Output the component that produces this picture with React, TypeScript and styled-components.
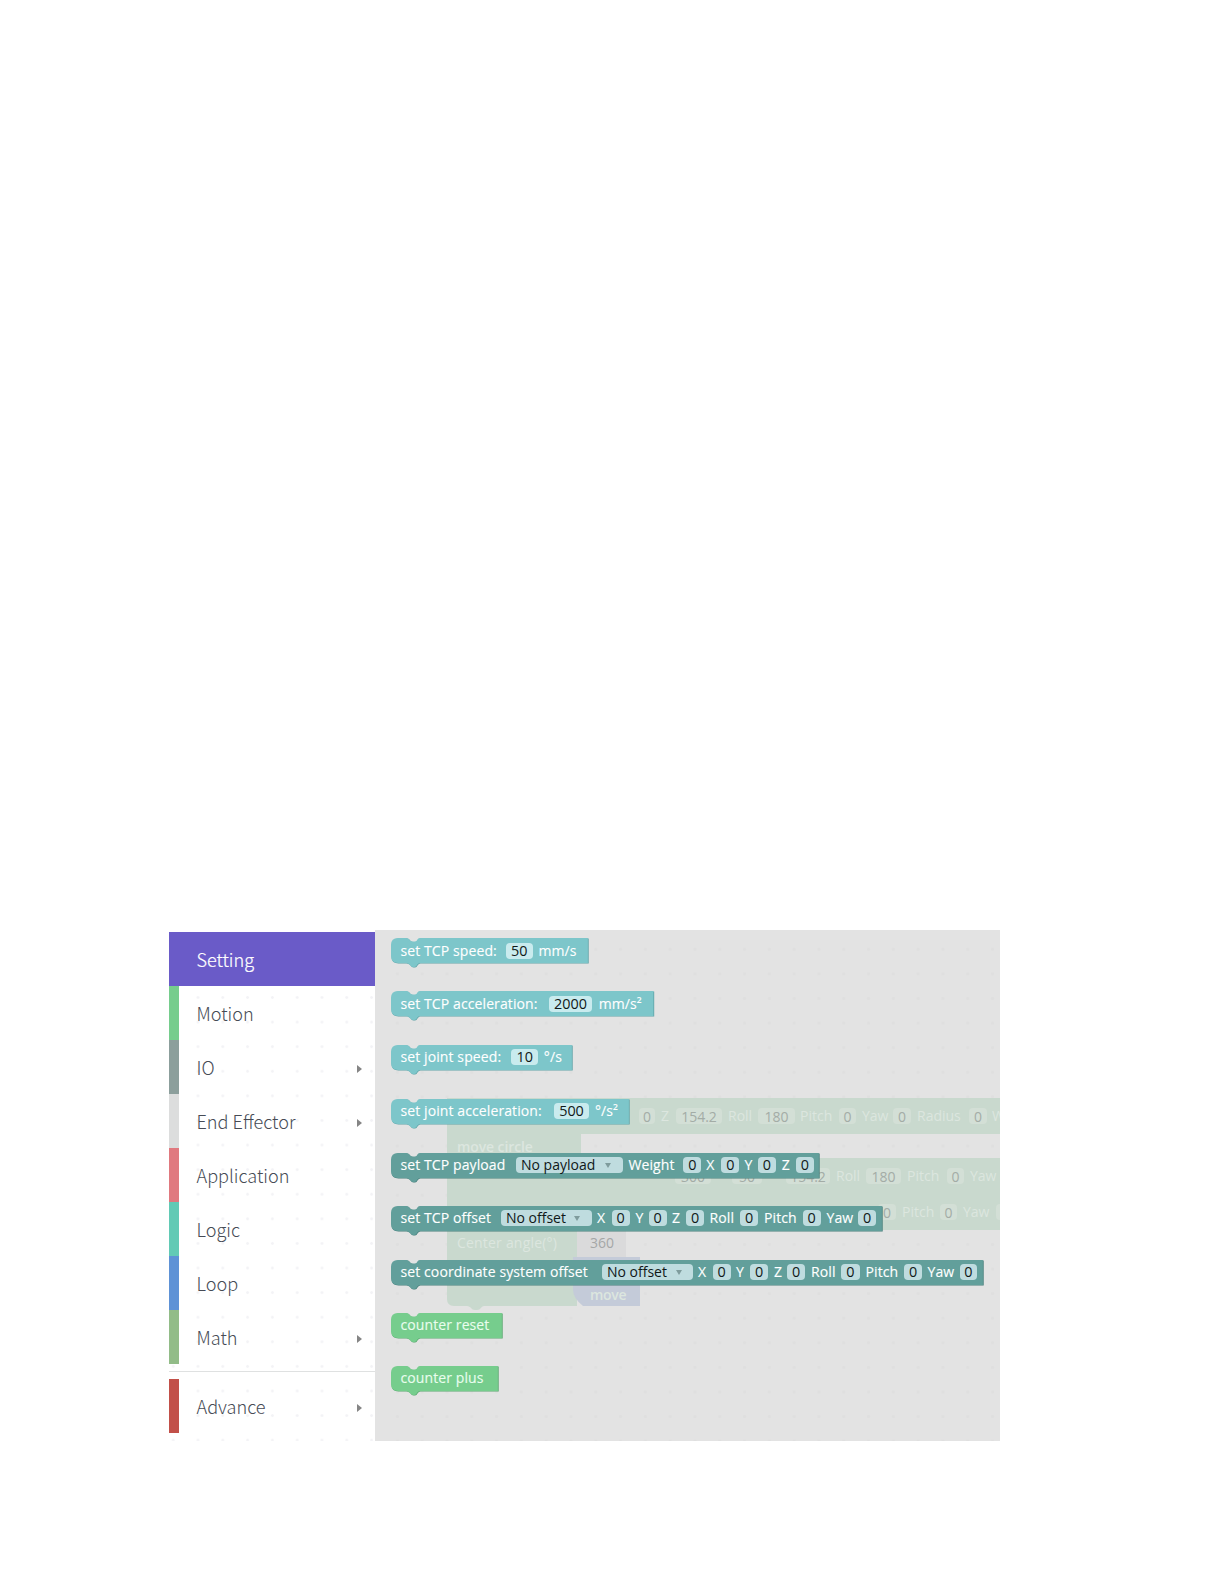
import styled, { createGlobalStyle } from "styled-components";

const GlobalStyle = createGlobalStyle`
  * {
    box-sizing: border-box;
  }
  body {
    margin: 0;
    background: #fff;
  }
`;

const Page = styled.div`
  display: flex;
  align-items: flex-start;
  width: 1224px;
  height: 1584px;
  padding: 930px 0 0 169px;
  overflow: hidden;
`;

const Toolbox = styled.nav`
  display: flex;
  flex-direction: column;
  width: 206px;
  height: 511px;
  padding-top: 2px;
  background-image: radial-gradient(circle, #f3f3f6 1px, transparent 1.7px);
  background-size: 24.8px 24.6px;
  background-position: 16.6px 6px;
`;

const Category = styled.div<{ $color: string; $active?: boolean }>`
  display: flex;
  align-items: center;
  justify-content: space-between;
  height: 54px;
  padding: 0 13.5px 0 17.5px;
  border-left: 10px solid ${(p) => p.$color};
  background: ${(p) => (p.$active ? p.$color : "transparent")};
  color: ${(p) => (p.$active ? "#fff" : "#464b55")};
  font-family: "Noto Sans CJK SC", sans-serif;
  font-size: 18.1px;
  font-weight: 300;
  line-height: 54px;
  -webkit-text-stroke: ${(p) => (p.$active ? "0.2px #fff" : "0")};
`;

const Expand = styled.i`
  width: 0;
  height: 0;
  margin-top: 4px;
  border: solid transparent;
  border-width: 4px 0 4px 5.5px;
  border-left-color: #858585;
`;

const Separator = styled.hr`
  width: 100%;
  height: 1px;
  margin: 7px 0;
  border: 0;
  background: #dfe1e1;
`;

const Flyout = styled.main`
  position: relative;
  width: 625px;
  height: 511px;
  overflow: hidden;
  background-color: #e3e3e3;
  background-image: radial-gradient(circle, #dfdfdf 1px, transparent 2px);
  background-size: 24.8px 24.6px;
  background-position: 10px 7px;
`;

const Ghosts = styled.div`
  position: absolute;
  inset: 0;
`;

const GhostShapes = styled.svg`
  position: absolute;
  left: 0;
  top: 0;
`;

const GhostText = styled.span<{ $x: number; $y: number; $dark?: boolean; $ls?: number; $bold?: boolean }>`
  position: absolute;
  left: ${(p) => p.$x}px;
  top: ${(p) => p.$y - 10}px;
  color: ${(p) => (p.$dark ? "#a5a7a7" : "#dce6df")};
  font: ${(p) => (p.$bold ? 600 : 400)} 14px/20px "Open Sans", sans-serif;
  letter-spacing: ${(p) => p.$ls ?? 0}px;
  white-space: pre;
`;

const GhostField = styled.span<{ $x: number; $y: number; $w: number }>`
  position: absolute;
  left: ${(p) => p.$x}px;
  top: ${(p) => p.$y - 8}px;
  width: ${(p) => p.$w}px;
  height: 16px;
  border-radius: 4px;
  background: #d3dfd6;
  color: #a3aca6;
  font: 14px/17px "Open Sans", sans-serif;
  text-align: center;
`;

const BlockList = styled.div`
  position: relative;
  display: flex;
  flex-direction: column;
  padding: 8px 0 0 16px;
`;

const BlockRow = styled.div<{ $w: number; $h: number }>`
  position: relative;
  display: flex;
  align-items: flex-start;
  width: ${(p) => p.$w}px;
  height: ${(p) => p.$h}px;
  padding: 4.5px 0 0 9.5px;
`;

const Outline = styled.svg`
  position: absolute;
  left: 0;
  top: 0;
  overflow: visible;
`;

const Label = styled.span<{ $w: number; $light?: boolean }>`
  position: relative;
  flex: none;
  width: ${(p) => p.$w}px;
  color: ${(p) => (p.$light ? "#e9fdee" : "#fff")};
  font: 14px/16px "Open Sans", sans-serif;
  letter-spacing: 0.1px;
  white-space: pre;
  -webkit-text-stroke: 0.12px currentColor;
`;

const Field = styled.span<{ $w: number; $gap: number; $bg: string; $menu?: boolean }>`
  position: relative;
  display: flex;
  flex: none;
  align-items: center;
  justify-content: ${(p) => (p.$menu ? "space-between" : "center")};
  width: ${(p) => p.$w}px;
  height: 16px;
  margin-right: ${(p) => p.$gap}px;
  padding: ${(p) => (p.$menu ? "0 11.5px 0 5px" : "0")};
  border-radius: 4px;
  background: ${(p) => p.$bg};
  color: #101818;
  font: ${(p) => (p.$menu ? 14 : 14.4)}px/16px "Open Sans", sans-serif;
  white-space: pre;
`;

const Arrow = styled.i`
  width: 0;
  height: 0;
  border: solid transparent;
  border-width: 5px 3px 0;
  border-top-color: #7f9c9d;
`;

type Part = { kind: "label" | "field" | "menu"; text: string; w: number; gap?: number };

const label = (text: string, w: number): Part => ({ kind: "label", text, w });
const field = (text: string, w: number, gap = 0): Part => ({ kind: "field", text, w, gap });
const menu = (text: string, w: number, gap: number): Part => ({ kind: "menu", text, w, gap });

const themes = {
  cyan: { fill: "#7dc6ca", edge: "#5fa3a7", field: "#c9ebee" },
  teal: { fill: "#629f9b", edge: "#477f7b", field: "#bfdcdf" },
  green: { fill: "#76cd8d", edge: "#59a76e", field: "#c8ebd1" },
};

type BlockData = { theme: keyof typeof themes; w: number; h: number; parts: Part[] };

const blocks: BlockData[] = [
  {
    theme: "cyan", w: 198, h: 53.3,
    parts: [label("set TCP speed:", 105.2), field("50", 27.3, 5.5), label("mm/s", 40)],
  },
  {
    theme: "cyan", w: 263.5, h: 53.7,
    parts: [label("set TCP acceleration:", 148.2), field("2000", 43.5, 6.5), label("mm/s²", 46)],
  },
  {
    theme: "cyan", w: 182, h: 54,
    parts: [label("set joint speed:", 110.5), field("10", 27.3, 5.5), label("°/s", 20)],
  },
  {
    theme: "cyan", w: 239, h: 54,
    parts: [label("set joint acceleration:", 153.5), field("500", 35, 6), label("°/s²", 24)],
  },
  {
    theme: "teal", w: 429, h: 53,
    parts: [
      label("set TCP payload", 115.5), menu("No payload", 106.5, 6), label("Weight", 54.8), field("0", 18, 5),
      label("X", 15.2), field("0", 18, 5), label("Y", 13.5), field("0", 18, 5.7), label("Z", 14.3), field("0", 18),
    ],
  },
  {
    theme: "teal", w: 492, h: 54,
    parts: [
      label("set TCP offset", 100.5), menu("No offset", 90.5, 5.5), label("X", 14.5), field("0", 18, 6),
      label("Y", 13), field("0", 18, 5.5), label("Z", 14), field("0", 18, 5.5), label("Roll", 30.5), field("0", 18, 6),
      label("Pitch", 38.5), field("0", 18, 6), label("Yaw", 31.5), field("0", 18),
    ],
  },
  {
    theme: "teal", w: 593, h: 53,
    parts: [
      label("set coordinate system offset", 201.5), menu("No offset", 91, 5), label("X", 14.5), field("0", 18, 5.5),
      label("Y", 14), field("0", 18, 6), label("Z", 13), field("0", 18, 6), label("Roll", 30), field("0", 18.5, 6),
      label("Pitch", 38.5), field("0", 18, 5.5), label("Yaw", 32), field("0", 17.5),
    ],
  },
  { theme: "green", w: 112, h: 52.7, parts: [label("counter reset", 90)] },
  { theme: "green", w: 108, h: 40, parts: [label("counter plus", 90)] },
];

const blockPath = (w: number) =>
  `M0 7Q0 0 7 0H15.5C18 0 19 3.5 21.5 3.5H24C26.5 3.5 26 0 29 0H${w}V25H29C26 25 26 29 23.5 29H22C19.5 29 19 25 15 25H7Q0 25 0 18Z`;

function Block({ theme, w, h, parts }: BlockData) {
  const colors = themes[theme];
  return (
    <BlockRow $w={w} $h={h}>
      <Outline width={w} height={30}>
        <path d={blockPath(w - 0.8)} fill={colors.edge} transform="translate(.5 .6)" />
        <path d={blockPath(w - 1.1)} fill={colors.fill} />
      </Outline>
      {parts.map((part, index) =>
        part.kind === "label" ? (
          <Label key={index} $w={part.w} $light={theme === "green"}>
            {part.text}
          </Label>
        ) : (
          <Field
            key={index}
            $w={part.w}
            $gap={part.gap ?? 0}
            $bg={colors.field}
            $menu={part.kind === "menu"}
          >
            {part.text}
            {part.kind === "menu" && <Arrow />}
          </Field>
        )
      )}
    </BlockRow>
  );
}

const categories = [
  { name: "Setting", color: "#6a5bc8", active: true },
  { name: "Motion", color: "#76cd8d" },
  { name: "IO", color: "#8c9f9c", more: true },
  { name: "End Effector", color: "#dcdddd", more: true },
  { name: "Application", color: "#e0797f" },
  { name: "Logic", color: "#62cab5" },
  { name: "Loop", color: "#5e92d6" },
  { name: "Math", color: "#92bc88", more: true },
];

// workspace blocks that show faintly through the flyout
const ghostFields: [string, number, number, number][] = [
  ["0", 264, 186, 16], ["154.2", 301, 186, 46], ["180", 383, 186, 37], ["0", 464, 186, 17],
  ["0", 518, 186, 18], ["0", 594, 186, 18],
  ["300", 300, 246, 36], ["50", 357, 246, 30], ["154.2", 411, 246, 44], ["180", 491, 246, 35], ["0", 572, 246, 17],
  ["0", 503, 282, 18], ["0", 565, 282, 17], ["", 621, 282, 17],
];

const ghostLabels: [string, number, number][] = [
  ["Z", 286, 186], ["Roll", 353, 186], ["Pitch", 425, 186], ["Yaw", 487, 186], ["Radius", 542, 186], ["W", 617, 186],
  ["Roll", 461, 246], ["Pitch", 532, 246], ["Yaw", 595, 246],
  ["Pitch", 527, 282], ["Yaw", 588, 282],
];

function App() {
  return (
    <Page>
      <GlobalStyle />
      <Toolbox>
        {categories.map((item) => (
          <Category key={item.name} $color={item.color} $active={item.active}>
            {item.name}
            {item.more && <Expand />}
          </Category>
        ))}
        <Separator />
        <Category $color="#c25049">
          Advance
          <Expand />
        </Category>
      </Toolbox>
      <Flyout>
        <Ghosts>
          <GhostShapes width={625} height={511}>
            <path
              d="M72 168H625V204H206V228H625V300H202V376H109C106 376 106 380 102 380H100C96 380 96 376 92 376H79Q72 376 72 369Z"
              fill="#c9d9ce"
            />
            <path d="M202 300H251V327H202Z" fill="#dadadb" />
            <path d="M202 327H265V376H208Q198 368 198 360V327Z" fill="#c4cbd9" />
          </GhostShapes>
          {ghostFields.map(([text, x, y, w], index) => (
            <GhostField key={index} $x={x} $y={y} $w={w}>
              {text}
            </GhostField>
          ))}
          {ghostLabels.map(([text, x, y], index) => (
            <GhostText key={index} $x={x} $y={y}>
              {text}
            </GhostText>
          ))}
          <GhostText $x={82} $y={217} $bold $ls={-0.1}>
            move circle
          </GhostText>
          <GhostText $x={82} $y={313} $ls={0.2}>
            Center angle(°)
          </GhostText>
          <GhostText $x={215} $y={313} $dark>
            360
          </GhostText>
          <GhostText $x={215} $y={365} $bold $ls={-0.3}>
            move
          </GhostText>
        </Ghosts>
        <BlockList>
          {blocks.map((block, index) => (
            <Block key={index} {...block} />
          ))}
        </BlockList>
      </Flyout>
    </Page>
  );
}

export default App;
